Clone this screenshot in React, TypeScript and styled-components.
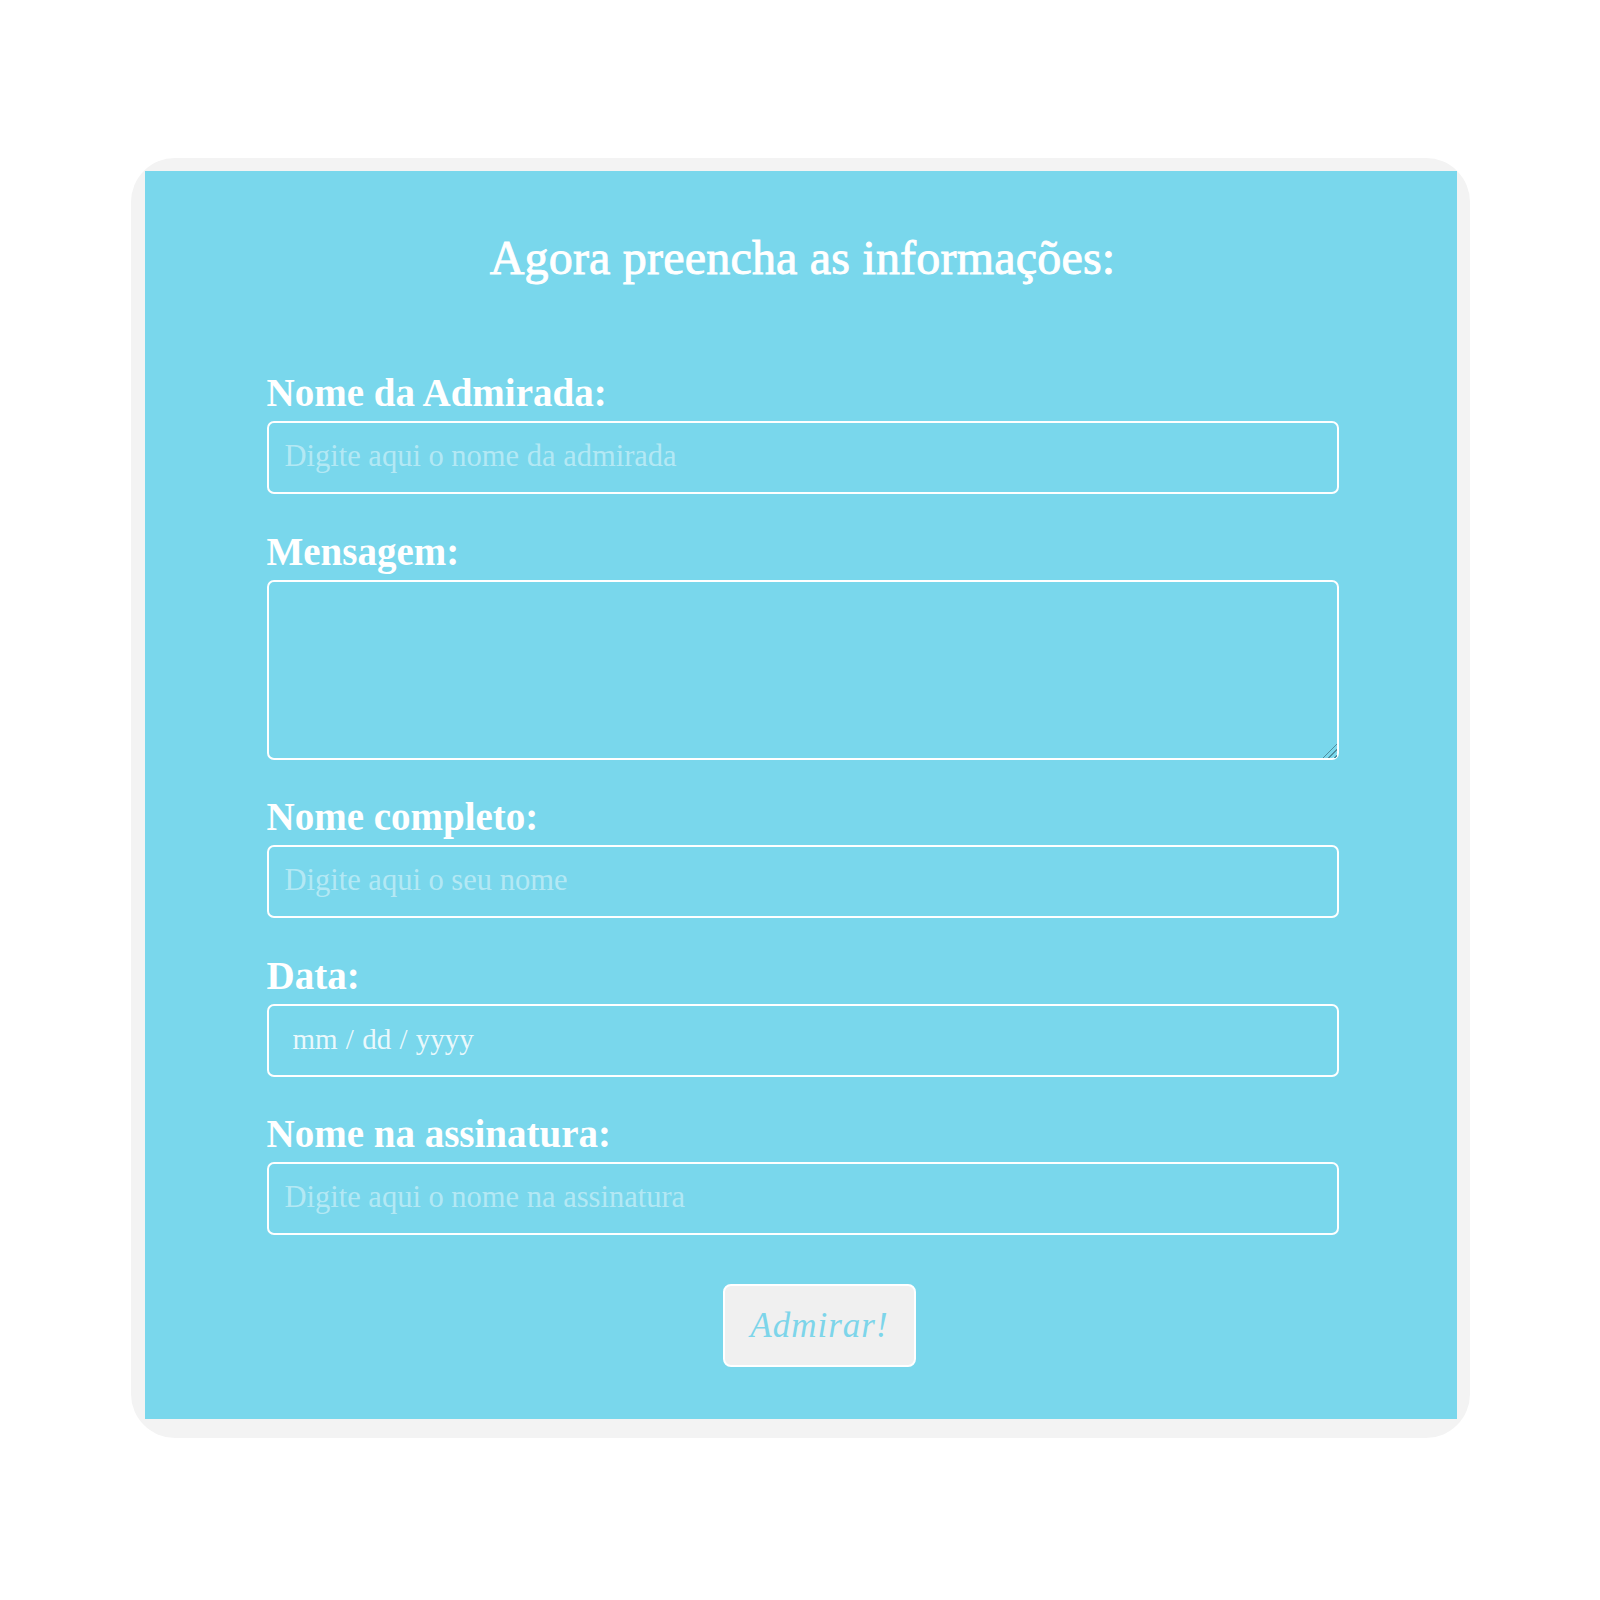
import React from "react";
import styled, { createGlobalStyle } from "styled-components";

const GlobalStyle = createGlobalStyle`
  html, body { margin: 0; padding: 0; background: #ffffff; }
  body { font-family: "Liberation Serif", "Times New Roman", serif; }
  * { box-sizing: border-box; }
`;

const Page = styled.main`
  padding-top: 158px;
  display: flex;
  justify-content: center;
`;

const Card = styled.div`
  width: 1339px;
  padding: 13px 13px 19px 14px;
  background: #f3f3f3;
  border-radius: 44px;
`;

const Panel = styled.section`
  background: #79d7ec;
  padding: 60px 118px 52px 122px;
`;

const Title = styled.h1`
  margin: 0;
  font-family: "Liberation Serif", "Times New Roman", serif;
  font-size: 48px;
  line-height: 53px;
  font-weight: 400;
  color: #ffffff;
  -webkit-text-stroke: 0.9px #ffffff;
  letter-spacing: 0.2px;
  text-align: center;
`;

const Form = styled.form`
  margin-top: 87px;
  display: flex;
  flex-direction: column;
  gap: 35.5px;
`;

const Field = styled.div`
  display: flex;
  flex-direction: column;
  gap: 6px;
`;

const Label = styled.label`
  font-family: "Liberation Serif", "Times New Roman", serif;
  font-size: 39px;
  line-height: 44px;
  font-weight: 700;
  color: #ffffff;
`;

const Input = styled.input<{ $date?: boolean }>`
  width: 100%;
  height: 73px;
  margin: 0;
  padding: 0 16px 2px ${(p) => (p.$date ? "24px" : "16px")};
  border: 2px solid #ffffff;
  border-radius: 7px;
  background: transparent;
  outline: none;
  color: #ffffff;
  font-family: "Liberation Serif", "Times New Roman", serif;
  font-size: ${(p) => (p.$date ? "29px" : "30.5px")};
  word-spacing: ${(p) => (p.$date ? "1px" : "0")};

  &::placeholder {
    color: ${(p) => (p.$date ? "rgba(255,255,255,0.85)" : "rgba(255,255,255,0.45)")};
    opacity: 1;
  }
`;

const TextArea = styled.textarea`
  width: 100%;
  height: 180px;
  margin: 0;
  padding: 12px 16px;
  border: 2px solid #ffffff;
  border-radius: 7px;
  background: transparent;
  outline: none;
  resize: vertical;
  color: #ffffff;
  font-family: "Liberation Serif", "Times New Roman", serif;
  font-size: 30.5px;
  display: block;

  &::-webkit-scrollbar {
    width: 24px;
    height: 24px;
    background: transparent;
  }

  &::-webkit-resizer {
    background:
      linear-gradient(315deg, transparent 50%, #79d7ec 50%),
      repeating-linear-gradient(135deg, transparent 0 2.5px, #4f8f9f 2.5px 4px);
  }
`;

const ButtonRow = styled.div`
  margin-top: 49px;
  display: flex;
  justify-content: center;
  padding-left: 34px;
`;

const SubmitButton = styled.button`
  width: 193px;
  height: 83px;
  margin: 0;
  padding: 0;
  background: #f0f0f0;
  border: 2px solid #ffffff;
  border-radius: 8px;
  color: #7dd5ea;
  font-family: "Liberation Serif", "Times New Roman", serif;
  font-style: italic;
  font-size: 35px;
  letter-spacing: 1px;
  cursor: pointer;
`;

export default function App() {
  return (
    <>
      <GlobalStyle />
      <Page>
        <Card>
          <Panel>
            <Title>Agora preencha as informações:</Title>
            <Form onSubmit={(e) => e.preventDefault()}>
              <Field>
                <Label htmlFor="admirada">Nome da Admirada:</Label>
                <Input id="admirada" type="text" placeholder="Digite aqui o nome da admirada" />
              </Field>
              <Field>
                <Label htmlFor="mensagem">Mensagem:</Label>
                <TextArea id="mensagem" />
              </Field>
              <Field>
                <Label htmlFor="nome">Nome completo:</Label>
                <Input id="nome" type="text" placeholder="Digite aqui o seu nome" />
              </Field>
              <Field>
                <Label htmlFor="data">Data:</Label>
                <Input id="data" type="text" $date placeholder="mm / dd / yyyy" />
              </Field>
              <Field>
                <Label htmlFor="assinatura">Nome na assinatura:</Label>
                <Input id="assinatura" type="text" placeholder="Digite aqui o nome na assinatura" />
              </Field>
            </Form>
            <ButtonRow>
              <SubmitButton type="button">Admirar!</SubmitButton>
            </ButtonRow>
          </Panel>
        </Card>
      </Page>
    </>
  );
}
